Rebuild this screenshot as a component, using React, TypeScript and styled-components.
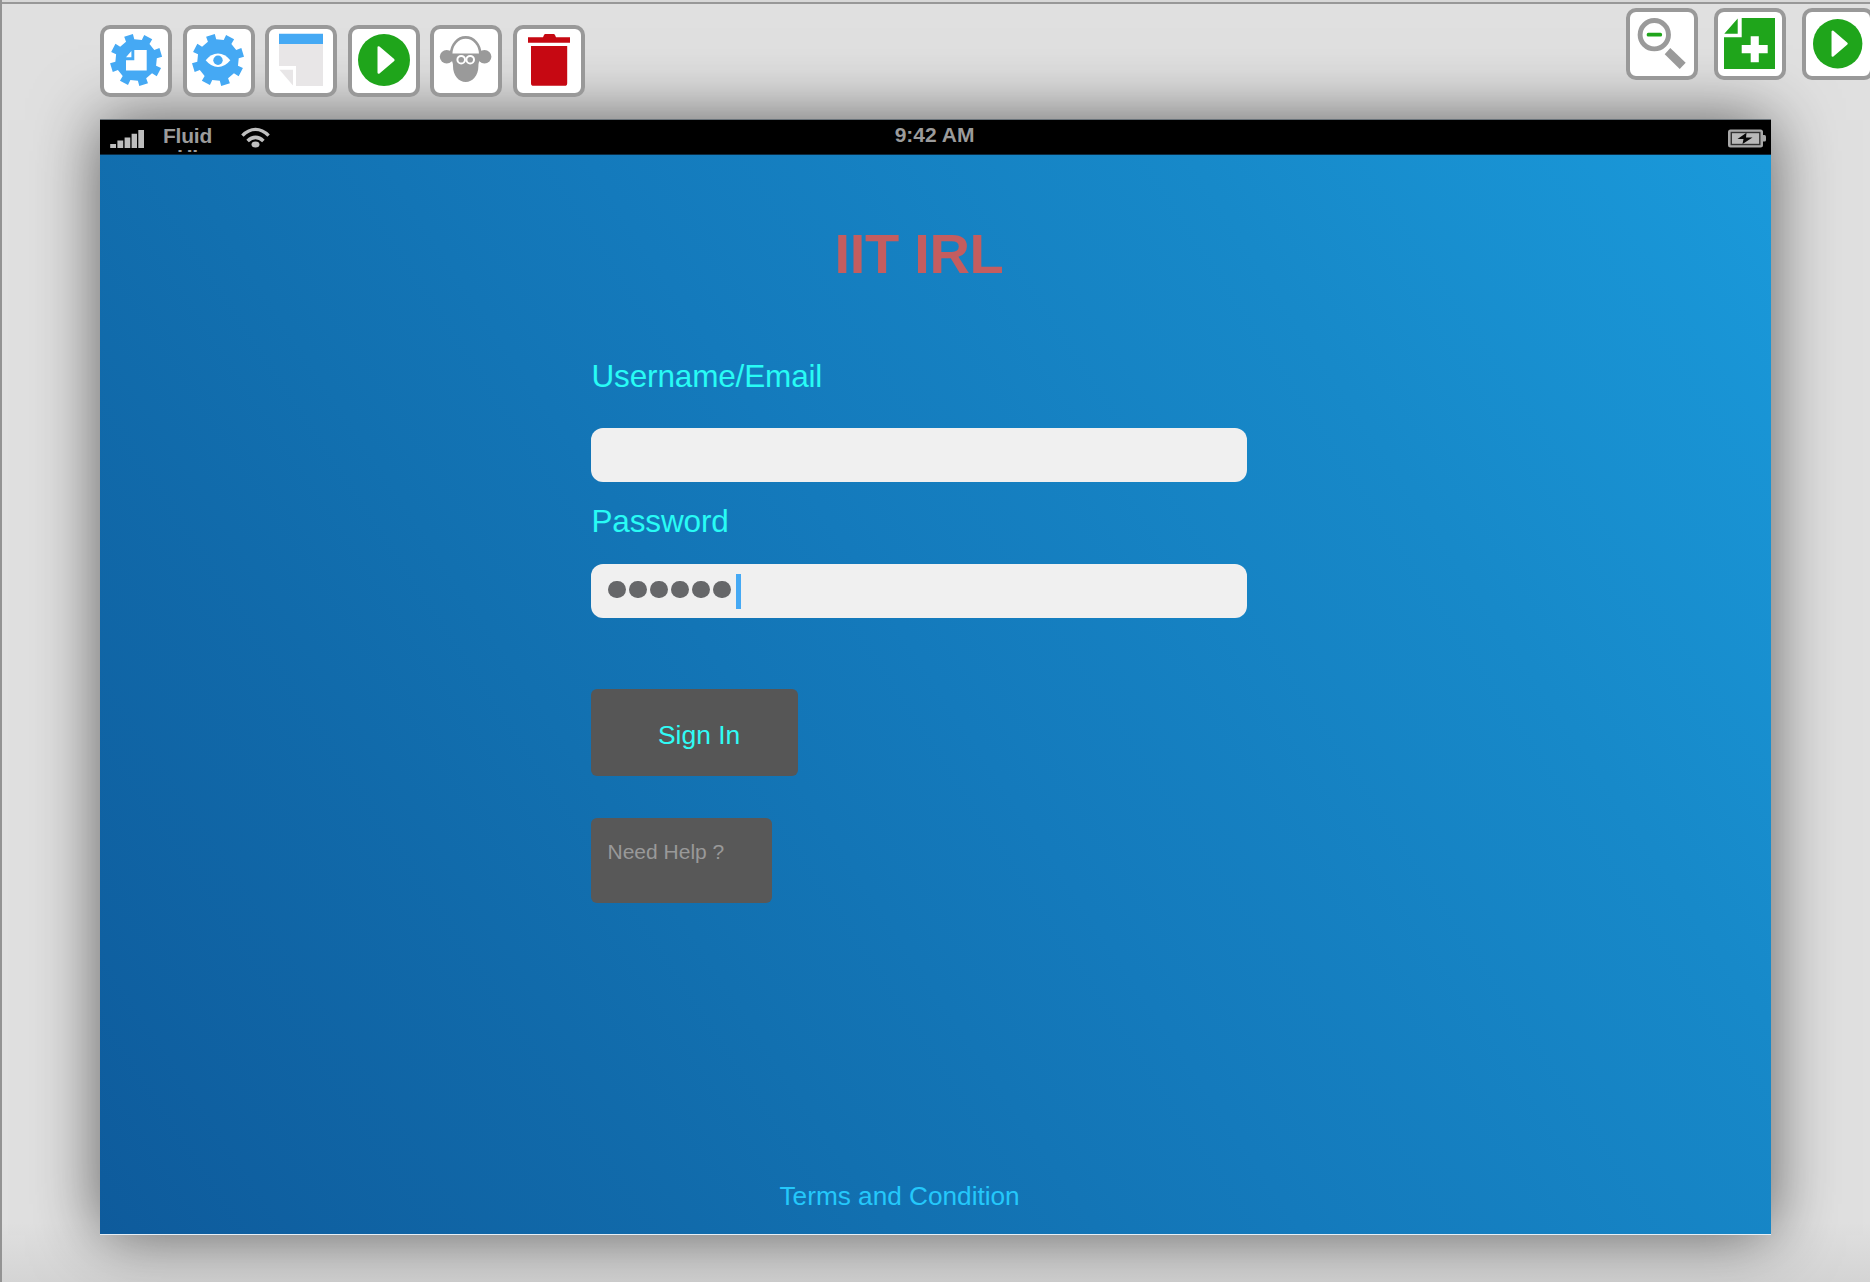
import React from "react";
import styled, { createGlobalStyle } from "styled-components";

const GlobalStyle = createGlobalStyle`
  html, body { margin: 0; padding: 0; }
  body { font-family: "Liberation Sans", Arial, Helvetica, sans-serif; }
  *, *::before, *::after { box-sizing: border-box; }
`;

const BLUE = "#45a9f4";
const GREEN = "#1fa51b";
const GREY = "#9a9a9a";

const Page = styled.div`
  width: 1870px;
  height: 1282px;
  overflow: hidden;
  display: flex;
  flex-direction: column;
  border-left: 2px solid #939393;
  background: linear-gradient(#e0e0e0 0 1222px, #d4d4d4 1282px);
`;

const TopEdge = styled.div`
  flex: none;
  height: 4px;
  background: #d8d8d8;
  border-bottom: 2px solid #989898;
`;

const Header = styled.header`
  flex: none;
  display: flex;
  justify-content: space-between;
  align-items: flex-start;
  width: 1872px;
  height: 116px;
  padding: 4px 0 0 98px;
  position: relative;
  z-index: 1;
`;

const Tools = styled.div<{ $gap: number; $top?: number }>`
  display: flex;
  gap: ${(p) => p.$gap}px;
  margin-top: ${(p) => p.$top ?? 0}px;
`;

const ToolButton = styled.button`
  flex: none;
  width: 72px;
  height: 72px;
  padding: 0;
  border: 4px solid #999;
  border-radius: 10px;
  background: #fff;
  svg { display: block; }
`;

const Device = styled.main`
  flex: none;
  width: 1671px;
  height: 1115px;
  margin-left: 98px;
  display: flex;
  flex-direction: column;
  border-bottom: 1px solid #e6eef5;
  background: linear-gradient(56.3deg, #0e5b9c 0%, #1270b0 33%, #147abc 50%, #1789c9 75%, #1a9adb 100%);
  box-shadow: 0 -1px 0 #6b747b, 0 0 62px rgba(0, 0, 0, 0.59);
`;

const StatusBar = styled.div`
  flex: none;
  height: 35px;
  display: grid;
  grid-template-columns: 1fr auto 1fr;
  background: #000;
  border-bottom: 1px solid #0b2c44;
  color: #9b9b9b;
  font-size: 21px;
  font-weight: bold;
  line-height: 22px;
`;

const StatusLeft = styled.div`
  display: flex;
  svg { display: block; }
`;

const Carrier = styled.div`
  width: 60px;
  height: 27px;
  margin: 5px 23.5px 0 11.5px;
  overflow: hidden;
  text-align: center;
  line-height: 21px;
  letter-spacing: -0.2px;
`;

const Clock = styled.div`
  padding: 4px 2px 0 0;
`;

const StatusRight = styled.div`
  display: flex;
  justify-content: flex-end;
  padding: 8px 5px 0 0;
`;

const Form = styled.form`
  width: 656px;
  margin-left: 491px;
  display: flex;
  flex-direction: column;
  align-items: flex-start;
`;

const Title = styled.h1`
  align-self: center;
  margin: 67px 0 1px;
  font-size: 56px;
  line-height: 64px;
  font-weight: bold;
  letter-spacing: -0.3px;
  color: #c45d5f;
`;

const Label = styled.label<{ $top: number }>`
  margin: ${(p) => p.$top}px 0 0 0.5px;
  font-size: 31.5px;
  line-height: 36px;
  letter-spacing: -0.15px;
  color: #28fbf5;
`;

const Field = styled.div<{ $top: number }>`
  width: 656px;
  height: 54px;
  margin-top: ${(p) => p.$top}px;
  padding-left: 17px;
  display: flex;
  align-items: center;
  gap: 3.4px;
  border-radius: 12px;
  background: #f0f0f0;
`;

const Dot = styled.span`
  width: 17.6px;
  height: 17.6px;
  margin-bottom: 3px;
  border-radius: 50%;
  background: #666769;
`;

const Caret = styled.span`
  width: 5px;
  height: 35px;
  margin-left: 2px;
  background: ${BLUE};
`;

const SignIn = styled.button`
  width: 207px;
  height: 87px;
  margin-top: 71px;
  padding: 30px 0 0 67px;
  display: flex;
  border: 0;
  border-radius: 6px;
  background: #565656;
  color: #30fbf5;
  font: 26.4px/32px "Liberation Sans", Arial, sans-serif;
`;

const Help = styled(SignIn)`
  width: 181px;
  height: 85px;
  margin-top: 42px;
  padding: 21px 0 0 16.5px;
  background: #585858;
  color: #999;
  font-size: 21px;
  line-height: 26px;
`;

const Terms = styled.a`
  margin: 277px 0 0 188.5px;
  font-size: 26.2px;
  line-height: 32px;
  color: #24c8fb;
`;

const gearPath = (cx: number, cy: number) => {
  const at = (deg: number, r: number) => {
    const a = (deg * Math.PI) / 180;
    return `${(cx + r * Math.cos(a)).toFixed(2)} ${(cy + r * Math.sin(a)).toFixed(2)}`;
  };
  const points: string[] = [];
  for (let i = 0; i < 8; i++) {
    const t = -17 + i * 45;
    points.push(at(t - 12, 20.8), at(t - 10, 26.2), at(t + 10, 26.2), at(t + 12, 20.8));
  }
  return `M${points.join("L")}Z`;
};

const Icon = ({ children }: { children: React.ReactNode }) => (
  <svg width="64" height="64" viewBox="0 0 64 64" aria-hidden="true">{children}</svg>
);

const PageSettings = () => (
  <Icon>
    <path d={gearPath(32.1, 31)} fill={BLUE} />
    <path d="M30.3 21H42.7V41.5H22V31.3H30.3ZM22 28.2H27.4V22Z" fill="#fff" />
  </Icon>
);

const ViewSettings = () => (
  <Icon>
    <path d={gearPath(31, 31)} fill={BLUE} />
    <path d="M18.7 31.3Q24 24.6 31 24.6T43.3 31.3Q38 38 31 38T18.7 31.3Z" fill="#fff" />
    <circle cx="31" cy="31.2" r="4.7" fill={BLUE} />
  </Icon>
);

const PageIcon = () => (
  <Icon>
    <path d="M10 4.7H54V15H10Z" fill={BLUE} />
    <path d="M10 15H54V57H27V37H10ZM10.5 40.7H24V56.5Z" fill="#e8e6e7" />
  </Icon>
);

const Play = ({ cx, cy, r }: { cx: number; cy: number; r: number }) => (
  <Icon>
    <circle cx={cx} cy={cy} r={r} fill={GREEN} />
    <path
      transform={`translate(${cx} ${cy}) scale(${r / 26})`}
      d="M-5.3-12.6V12.6L9.4 0Z"
      fill="#fff" stroke="#fff" strokeWidth="2.4" strokeLinejoin="round"
    />
  </Icon>
);

const Sheep = () => (
  <Icon>
    <g transform="translate(0.5 0)">
      <ellipse cx="12.2" cy="27.7" rx="6.9" ry="6.7" fill={GREY} />
      <ellipse cx="50" cy="27.7" rx="6.9" ry="6.7" fill={GREY} />
      <path d="M16.6 25.2A14.6 16.8 0 0 1 45.8 25.2" fill="#fff" stroke={GREY} strokeWidth="2.6" />
      <path d="M15.4 24.5H46.8V29Q43.9 32 43.9 37C43.9 46.5 38.2 53 31.2 53S18.5 46.5 18.5 37Q18.5 32 15.4 29Z" fill={GREY} />
      <g fill={GREY} stroke="#fff" strokeWidth="2">
        <circle cx="26.7" cy="30.7" r="3.8" />
        <circle cx="35.7" cy="30.7" r="3.8" />
      </g>
    </g>
  </Icon>
);

const Trash = () => (
  <Icon>
    <path d="M11 8.3H26L27 6Q27.4 5 28.5 5H36.5Q37.6 5 38 6L39 8.3H53V13.7H11ZM14 17H50.2V54.2Q50.2 56.8 47.6 56.8H16.6Q14 56.8 14 54.2Z" fill="#c60812" />
  </Icon>
);

const ZoomOut = () => (
  <Icon>
    <circle cx="24.3" cy="22.7" r="14.2" fill="none" stroke={GREY} strokeWidth="4.9" />
    <rect x="16.7" y="20.8" width="15.4" height="3.7" rx="1.6" fill={GREEN} />
    <path d="M40.3 36L55.7 50.7L49.7 57L34.7 42.2Z" fill={GREY} />
  </Icon>
);

const AddPage = () => (
  <Icon>
    <path d="M23.7 6H57V57H6V25.3H23.7ZM6.3 21.8H19.7V6.5Z" fill={GREEN} />
    <path d="M32.7 24.2H40.8V33H49.7V41.3H40.8V50.2H32.7V41.3H23.7V33H32.7Z" fill="#fff" />
  </Icon>
);

const Signal = () => (
  <svg width="46" height="34" viewBox="0 0 46 34" aria-hidden="true">
    <path fill="#bdbdbd" d="M10.2 24H16V28H10.2ZM17.4 20.6H23.2V28H17.4ZM24.6 17.4H30.3V28H24.6ZM31.6 13.8H37V28H31.6ZM38.3 10H44V28H38.3Z" />
  </svg>
);

const Wifi = () => (
  <svg width="30" height="34" viewBox="0 0 30 34" aria-hidden="true">
    <g fill="none" stroke="#bfbfbf">
      <path d="M1.4 15.6Q7.5 9.4 14.5 9.4T27.6 15.6" strokeWidth="3.4" />
      <path d="M6.6 21Q10.4 17.4 14.5 17.4T22.4 21" strokeWidth="3.6" />
    </g>
    <ellipse cx="14.5" cy="24.6" rx="4" ry="3" fill="#bfbfbf" />
  </svg>
);

const Battery = () => (
  <svg width="39" height="20" viewBox="0 0 39 20" aria-hidden="true">
    <rect x="1" y="1.5" width="35" height="18" rx="2.5" fill="#a8a8a8" />
    <path d="M36 7H37.5Q39 7 39 8.5V12Q39 13.5 37.5 13.5H36Z" fill="#a8a8a8" />
    <rect x="4.3" y="4.5" width="28.5" height="12" fill="#b9b9b9" stroke="#333" strokeWidth="1.4" />
    <path d="M19.5 4.8L10.5 11H16.5L15.5 16L25.5 9.5H19Z" fill="#080808" />
  </svg>
);

export default function App() {
  return (
    <Page>
      <GlobalStyle />
      <TopEdge />
      <Header>
        <Tools $gap={10.6} $top={17}>
          <ToolButton aria-label="Page settings"><PageSettings /></ToolButton>
          <ToolButton aria-label="View settings"><ViewSettings /></ToolButton>
          <ToolButton aria-label="Page"><PageIcon /></ToolButton>
          <ToolButton aria-label="Play page"><Play cx={32} cy={31} r={26} /></ToolButton>
          <ToolButton aria-label="Master"><Sheep /></ToolButton>
          <ToolButton aria-label="Delete"><Trash /></ToolButton>
        </Tools>
        <Tools $gap={16}>
          <ToolButton aria-label="Zoom out"><ZoomOut /></ToolButton>
          <ToolButton aria-label="Add page"><AddPage /></ToolButton>
          <ToolButton aria-label="Play project"><Play cx={31.7} cy={31.7} r={24.7} /></ToolButton>
        </Tools>
      </Header>
      <Device>
        <StatusBar>
          <StatusLeft>
            <Signal />
            <Carrier>Fluid UI</Carrier>
            <Wifi />
          </StatusLeft>
          <Clock>9:42 AM</Clock>
          <StatusRight><Battery /></StatusRight>
        </StatusBar>
        <Form onSubmit={(e) => e.preventDefault()}>
          <Title>IIT IRL</Title>
          <Label $top={71}>Username/Email</Label>
          <Field $top={34} />
          <Label $top={21}>Password</Label>
          <Field $top={25}>
            {Array.from({ length: 6 }, (_, i) => <Dot key={i} />)}
            <Caret />
          </Field>
          <SignIn type="submit">Sign In</SignIn>
          <Help type="button">Need Help ?</Help>
          <Terms>Terms and Condition</Terms>
        </Form>
      </Device>
    </Page>
  );
}
